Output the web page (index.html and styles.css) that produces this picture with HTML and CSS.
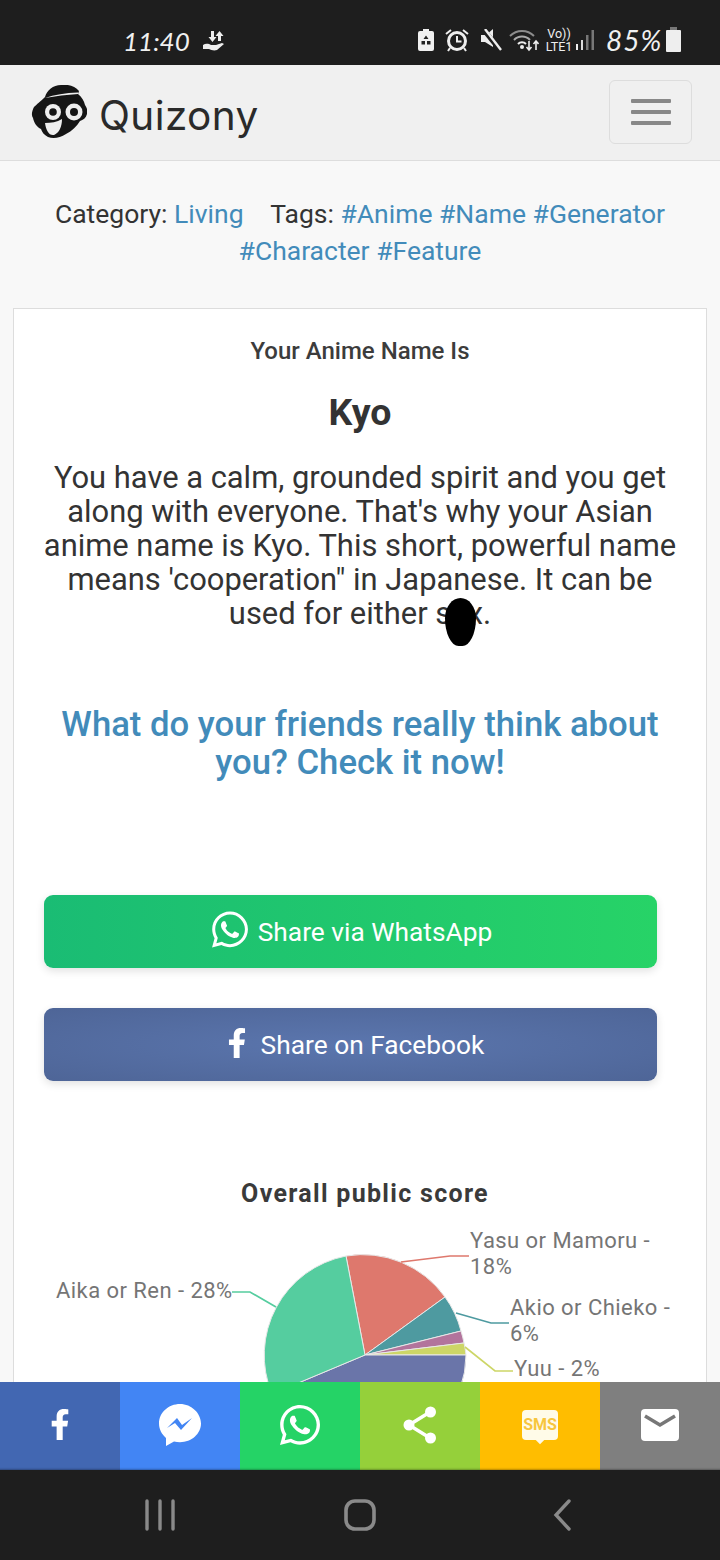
FILE: index.html
```html
<!DOCTYPE html>
<html lang="en">
<head>
  <meta charset="UTF-8">
  <title>Your Anime Name Is Kyo - Quizony</title>
  <link rel="stylesheet" href="styles.css">
</head>
<body>
  <svg class="defs" width="0" height="0">
    <symbol id="i-whatsapp" viewBox="0 0 448 512">
      <path d="M380.9 97.1C339 55.1 283.2 32 223.9 32c-122.4 0-222 99.6-222 222 0 39.1 10.2 77.3 29.6 111L0 480l117.7-30.9c32.4 17.7 68.9 27 106.1 27h.1c122.3 0 224.1-99.6 224.1-222 0-59.3-25.2-115-67.1-157zm-157 341.6c-33.2 0-65.7-8.9-94-25.7l-6.7-4-69.8 18.3L72 359.2l-4.4-7c-18.5-29.4-28.2-63.3-28.2-98.2 0-101.7 82.8-184.5 184.6-184.5 49.3 0 95.6 19.2 130.4 54.1 34.8 34.9 56.2 81.2 56.1 130.5 0 101.8-84.9 184.6-186.6 184.6zm101.2-138.2c-5.5-2.8-32.8-16.2-37.9-18-5.1-1.9-8.8-2.8-12.5 2.8-3.7 5.6-14.3 18-17.6 21.8-3.2 3.7-6.5 4.2-12 1.4-32.6-16.3-54-29.1-75.5-66-5.7-9.8 5.7-9.1 16.3-30.3 1.8-3.7.9-6.9-.5-9.7-1.4-2.8-12.5-30.1-17.1-41.2-4.5-10.8-9.1-9.3-12.5-9.5-3.2-.2-6.9-.2-10.6-.2-3.7 0-9.7 1.4-14.8 6.9-5.1 5.6-19.4 19-19.4 46.3 0 27.3 19.9 53.7 22.6 57.4 2.8 3.7 39.1 59.7 94.8 83.8 35.2 15.2 49 16.5 66.6 13.9 10.7-1.6 32.8-13.4 37.4-26.4 4.6-13 4.6-24.1 3.2-26.4-1.3-2.5-5-3.9-10.5-6.6z"/>
    </symbol>
    <symbol id="i-facebook" viewBox="0 0 320 512">
      <path d="M279.14 288l14.22-92.66h-88.91v-60.13c0-25.35 12.42-50.06 52.24-50.06h40.42V6.26S260.43 0 225.36 0c-73.22 0-121.08 44.38-121.08 124.72v70.62H22.89V288h81.39v224h100.17V288z"/>
    </symbol>
  </svg>

  <div class="phone">
    <div class="status-bar">
      <div class="status-left">
        <span class="clock">11:40</span>
        <svg class="st-data" viewBox="0 0 22 22" width="22" height="22">
          <path d="M8 1h3v6h2.500L9.500 12 5.500 7H8zM15 11h3V6h2.500L16.500 1l-4 5H15z" fill="#eee"/>
          <path d="M0 15c3-2 6-1 8 0h5l6-2 2 1-7 6c-3 1-6 0-8-1H0z" fill="#eee"/>
        </svg>
      </div>
      <div class="status-right">
        <svg class="st-saver" viewBox="0 0 16 22" width="16" height="22">
          <path d="M5 0h6v2h3a2 2 0 0 1 2 2v16a2 2 0 0 1-2 2H2a2 2 0 0 1-2-2V4a2 2 0 0 1 2-2h3z" fill="#f0f0f0"/>
          <path d="M8 6.500l2.500 3.500H5.500zM3.500 12h3.500v3.500H3.500zM9 12h3.500v3.500H9z" fill="#222"/>
        </svg>
        <svg class="st-alarm" viewBox="0 0 24 24" width="24" height="24">
          <circle cx="12" cy="13" r="8.500" fill="none" stroke="#eee" stroke-width="3"/>
          <path d="M12 8v5.500h4.500" fill="none" stroke="#eee" stroke-width="2"/>
          <path d="M1 6l5-4M23 6l-5-4M5 20l-2 3M19 20l2 3" stroke="#eee" stroke-width="2"/>
        </svg>
        <svg class="st-mute" viewBox="0 0 21 22" width="21" height="22">
          <path d="M0 6h5l7-6v18l-8-5H0z" fill="#eee"/>
          <path d="M2 0l17 21" stroke="#1e1e1e" stroke-width="5"/>
          <path d="M4 0l16 21" stroke="#eee" stroke-width="2.400"/>
        </svg>
        <svg class="st-wifi" viewBox="0 0 30 24" width="30" height="24">
          <path d="M1 8a17 17 0 0 1 24 0" fill="none" stroke="#8c8c8c" stroke-width="2"/>
          <path d="M5 12a11 11 0 0 1 16 0" fill="none" stroke="#aaa" stroke-width="2"/>
          <path d="M9 16a5.500 5.500 0 0 1 8 0" fill="none" stroke="#eee" stroke-width="2"/>
          <circle cx="13" cy="19" r="2" fill="#eee"/>
          <path d="M20 13v9M17.500 19l2.500 3 2.500-3M27 22v-9M24.500 16l2.500-3 2.500 3" fill="none" stroke="#eee" stroke-width="1.600"/>
        </svg>
        <div class="st-volte"><span>Vo))</span><span>LTE1</span></div>
        <svg class="st-signal" viewBox="0 0 20 22" width="20" height="22">
          <path d="M1 15h2v6H1z" fill="#eee"/>
          <path d="M6 11h2v10H6z" fill="#ddd"/>
          <path d="M11 6h2.500v15H11z" fill="#777"/>
          <path d="M16.500 1H19v20h-2.500z" fill="#777"/>
        </svg>
        <span class="battery-pct">85%</span>
        <div class="st-battery"><i></i></div>
      </div>
    </div>

    <header class="navbar">
      <a class="brand" href="#">
        <svg class="brand-face" viewBox="0 0 56 54" width="56" height="54">
          <path d="M14 12C16 5 22 0 30 0c7-1 14 1 18 6l-1 3c4 3 6 7 7 11 2 3 3 6 2 9-1 4-4 6-7 7-3 5-8 10-14 13-6 4-13 5-18 3-4-2-6-5-7-8-4-2-7-6-8-11-2-3-1-7 1-11 3-3 6-5 11-10z" fill="#151515"/>
          <path d="M14 13Q28 8 47 7.500V9Q30 10 14 13z" fill="#eee"/>
          <circle cx="22" cy="27" r="8" fill="#eee"/>
          <circle cx="22" cy="27" r="3.800" fill="#151515"/>
          <circle cx="43" cy="27" r="8.500" fill="#eee"/>
          <circle cx="43" cy="27" r="4" fill="#151515"/>
          <path d="M14 38c6 0 12-1 17-4 0 8-3 14-8 16-5 1-8-5-9-12z" fill="#eee"/>
        </svg>
        <span class="brand-name">Quizony</span>
      </a>
      <button class="nav-toggle" type="button"><i></i><i></i><i></i></button>
    </header>

    <main class="content">
      <p class="meta">
        Category: <a href="#">Living</a>
        <span class="tags">Tags: <a href="#">#Anime</a> <a href="#">#Name</a> <a href="#">#Generator</a> <a href="#">#Character</a> <a href="#">#Feature</a></span>
      </p>

      <section class="card">
        <h3 class="result-label">Your Anime Name Is</h3>
        <h2 class="result-name">Kyo</h2>
        <p class="result-text">You have a calm, grounded spirit and you get along with everyone. That's why your Asian anime name is Kyo. This short, powerful name means 'cooperation" in Japanese. It can be used for either <span class="word-covered">sex<span class="blot"></span></span>.</p>

        <a class="friends-link" href="#">What do your friends really think about you? Check it now!</a>

        <div class="share-buttons">
          <a class="share-btn btn-whatsapp" href="#">
            <svg class="btn-icon-wa"><use href="#i-whatsapp"/></svg>
            Share via WhatsApp
          </a>
          <a class="share-btn btn-facebook" href="#">
            <svg class="btn-icon-fb"><use href="#i-facebook"/></svg>
            Share on Facebook
          </a>
        </div>

        <h4 class="score-title">Overall public score</h4>

        <!-- pie chart, drawn in page coordinates -->
        <svg class="score-chart" viewBox="14 1222 692 240" width="692" height="240">
          <g stroke="#e8e8e8" stroke-width="1">
            <path d="M365 1355L346 1256A101 101 0 0 1 445 1297Z" fill="#de786d"/>
            <path d="M365 1355L445 1297A101 101 0 0 1 461 1331Z" fill="#4e9aa0"/>
            <path d="M365 1355L461 1331A101 101 0 0 1 464 1343Z" fill="#b2749c"/>
            <path d="M365 1355L464 1343A101 101 0 0 1 466 1355Z" fill="#cdd667"/>
            <path d="M365 1355L466 1355A101 101 0 0 1 272 1394Z" fill="#6a75a9"/>
            <path d="M365 1355L272 1394A101 101 0 0 1 346 1256Z" fill="#55cd9f"/>
          </g>
          <g fill="none" stroke-width="1.700">
            <path d="M232 1292H250L276 1307" stroke="#55cd9f"/>
            <path d="M401 1262L450 1256H469" stroke="#de786d"/>
            <path d="M456 1313L491 1323H509" stroke="#4e9aa0"/>
            <path d="M465 1347L495 1371H513" stroke="#cdd667"/>
          </g>
          <g class="chart-labels">
            <text x="56" y="1298">Aika or Ren - 28%</text>
            <text x="470" y="1248">Yasu or Mamoru -</text>
            <text x="470" y="1274">18%</text>
            <text x="510" y="1315">Akio or Chieko -</text>
            <text x="510" y="1341">6%</text>
            <text x="514" y="1376">Yuu - 2%</text>
          </g>
        </svg>
      </section>
    </main>

    <nav class="share-bar">
      <a class="sb-facebook" href="#"><svg class="sb-f"><use href="#i-facebook"/></svg></a>
      <a class="sb-messenger" href="#">
        <svg viewBox="0 0 42 42" width="42" height="42">
          <path d="M21 0C9.500 0 0 8.500 0 19.500c0 6 3 11 7 14.500v8l8-4.500c2 .5 4 .7 6 .7 11.500 0 21-8.500 21-18.700S32.500 0 21 0z" fill="#fff"/>
          <path d="M8 24l10-10 5 7 10-7-11 12-6-7z" fill="#4285f4"/>
        </svg>
      </a>
      <a class="sb-whatsapp" href="#"><svg class="sb-wa"><use href="#i-whatsapp"/></svg></a>
      <a class="sb-share" href="#">
        <svg viewBox="0 0 34 38" width="34" height="38">
          <path d="M27 6L6 19l21 13" fill="none" stroke="#fff" stroke-width="3.500"/>
          <circle cx="27.500" cy="6" r="5.500" fill="#fff"/>
          <circle cx="6" cy="19" r="5.500" fill="#fff"/>
          <circle cx="27.500" cy="32" r="5.500" fill="#fff"/>
        </svg>
      </a>
      <a class="sb-sms" href="#"><span class="sms-bubble">SMS</span></a>
      <a class="sb-mail" href="#">
        <svg viewBox="0 0 38 32" width="38" height="32">
          <rect width="38" height="32" rx="4" fill="#fff"/>
          <path d="M4 7l15 9 15-9" fill="none" stroke="#777" stroke-width="3.500"/>
        </svg>
      </a>
    </nav>

    <div class="system-nav">
      <svg viewBox="0 0 30 32" width="30" height="32">
        <path d="M2 2v28M15 2v28M28 2v28" stroke="#8a8a8a" stroke-width="3.400" stroke-linecap="round"/>
      </svg>
      <svg viewBox="0 0 32 32" width="32" height="32">
        <rect x="2" y="2" width="28" height="28" rx="9" fill="none" stroke="#8a8a8a" stroke-width="3.600"/>
      </svg>
      <svg class="nav-back" viewBox="0 0 20 32" width="20" height="32">
        <path d="M17 2L4 16l13 14" fill="none" stroke="#8a8a8a" stroke-width="3.400" stroke-linecap="round"/>
      </svg>
    </div>
  </div>
</body>
</html>
```

FILE: styles.css
```css
* { box-sizing: border-box; }
html, body { margin: 0; padding: 0; }
body { font-family: Roboto, "Liberation Sans", sans-serif; color: #333; }
a { color: #428bba; text-decoration: none; }
.defs { display: block; height: 0; }

.phone { width: 720px; height: 1560px; display: flex; flex-direction: column; overflow: hidden; background: #f8f8f8; }

/* system status bar */
.status-bar { flex: 0 0 65px; background: #1e1e1e; color: #f0f0f0; display: flex; justify-content: space-between; align-items: flex-end; padding: 0 39px 12px 123px; }
.status-left { display: flex; align-items: center; gap: 13px; }
.clock { font-family: Lato, sans-serif; font-style: italic; font-size: 26px; line-height: 24px; }
.status-right { display: flex; align-items: center; }
.st-saver { margin-right: 11px; }
.st-alarm { margin-right: 12px; }
.st-mute { margin-right: 7px; }
.st-wifi { margin-right: 6px; }
.st-volte { display: flex; flex-direction: column; align-items: center; font-size: 12.5px; line-height: 13px; color: #eee; margin-right: 2px; width: 28px; }
.st-signal { margin-right: 11px; }
.battery-pct { font-family: Lato, sans-serif; font-style: italic; font-size: 28px; letter-spacing: 1px; line-height: 24px; width: 60px; }
.st-battery { width: 15px; height: 22px; background: #eee; position: relative; border-radius: 1px; margin-top: 2px; }
.st-battery i { display: block; width: 7px; height: 3px; background: #777; position: absolute; top: -3px; left: 4px; }

/* site header */
.navbar { flex: 0 0 96px; background: #f0f0f0; border-bottom: 1px solid #ddd; display: flex; align-items: center; justify-content: space-between; padding: 0 28px 1px 31px; }
.brand { display: flex; align-items: center; gap: 12px; }
.brand-name { font-family: Inter, sans-serif; font-size: 40.5px; font-weight: 400; letter-spacing: .4px; color: #2a2a2a; margin-top: 6px; }
.nav-toggle { width: 83px; height: 64px; background: transparent; border: 1px solid #ddd; border-radius: 6px; display: flex; flex-direction: column; align-items: center; justify-content: center; gap: 7px; padding: 0; }
.nav-toggle i { display: block; width: 40px; height: 4px; border-radius: 1px; background: #888; }

/* page body */
.content { flex: 1; min-height: 0; overflow: hidden; padding: 34px 13px 0; }
.meta { margin: 0 0 39px; text-align: center; font-size: 26.5px; line-height: 37px; }
.tags { margin-left: 20px; }

.card { background: #fff; border: 1px solid #ddd; padding: 26px 28px 0; text-align: center; }
.result-label { margin: 0; font-size: 24px; font-weight: 500; line-height: 32px; color: #3c3c3c; }
.result-name { margin: 25px 0 0; font-size: 37.5px; font-weight: 700; line-height: 40px; }
.result-text { margin: 29px 0 0; font-size: 30.9px; line-height: 34px; }
.word-covered { position: relative; }
.blot { position: absolute; left: 10px; top: 3px; width: 31px; height: 48px; background: #000; border-radius: 50% 50% 44% 44% / 42% 42% 58% 58%; }

.friends-link { display: block; margin-top: 74px; font-size: 34.7px; font-weight: 500; line-height: 38px; }

.share-buttons { display: flex; flex-direction: column; gap: 40px; margin: 114px 21px 0 2px; }
.share-btn { height: 73px; border-radius: 9px; display: flex; align-items: center; justify-content: center; gap: 10px; color: #fff; font-size: 26.3px; box-shadow: 0 3px 8px rgba(0, 0, 0, .12); }
.btn-whatsapp { background: linear-gradient(90deg, #1abc74, #27d367); padding-left: 3px; }
.btn-facebook { background: radial-gradient(ellipse at center, #5b76ae, #4e6597); padding-left: 10px; gap: 14px; }
.share-btn svg { fill: currentColor; }
.btn-icon-wa { width: 36px; height: 41px; margin-top: -4px; }
.btn-icon-fb { width: 20px; height: 30px; margin-top: -3px; }

.score-title { margin: 96px 0 0; padding-left: 10px; font-size: 25px; font-weight: 700; line-height: 34px; letter-spacing: 1.3px; color: #3a3a3a; }
.score-chart { display: block; margin: 11px -28px 0; }
.chart-labels text { font-family: Roboto, sans-serif; font-size: 22px; fill: #757575; letter-spacing: .45px; }

/* sticky share row */
.share-bar { flex: 0 0 88px; display: grid; grid-template-columns: repeat(6, 120px); }
.share-bar a { display: flex; align-items: center; justify-content: center; color: #fff; fill: #fff; box-shadow: inset 0 -3px 2px -2px rgba(0, 0, 0, .3); }
.sb-facebook { background: #4267b2; }
.sb-messenger { background: #4285f4; }
.sb-whatsapp { background: #25d366; }
.sb-share { background: #95d03a; }
.sb-sms { background: #ffbd00; }
.sb-mail { background: #7f7f7f; }
.sb-f { width: 20px; height: 31px; margin-top: -3px; }
.sb-wa { width: 40px; height: 46px; margin-top: -2px; }
.sb-messenger svg, .sb-share svg { margin-top: -2px; }
.sms-bubble { position: relative; width: 36px; height: 30px; background: #fffbe8; border-radius: 4px; color: #f7c63e; font-size: 16px; font-weight: 700; display: flex; align-items: center; justify-content: center; margin-top: -3px; }
.sms-bubble::after { content: ""; position: absolute; left: 15px; bottom: -3px; width: 6px; height: 6px; background: #fffbe8; transform: rotate(45deg); }
.sb-mail svg { margin-top: -3px; }

/* android buttons */
.system-nav { flex: 0 0 90px; background: #1e1e1e; display: grid; grid-template-columns: 200px 200px 200px; justify-content: center; justify-items: center; align-items: center; }
.nav-back { margin-left: 4px; }
```
